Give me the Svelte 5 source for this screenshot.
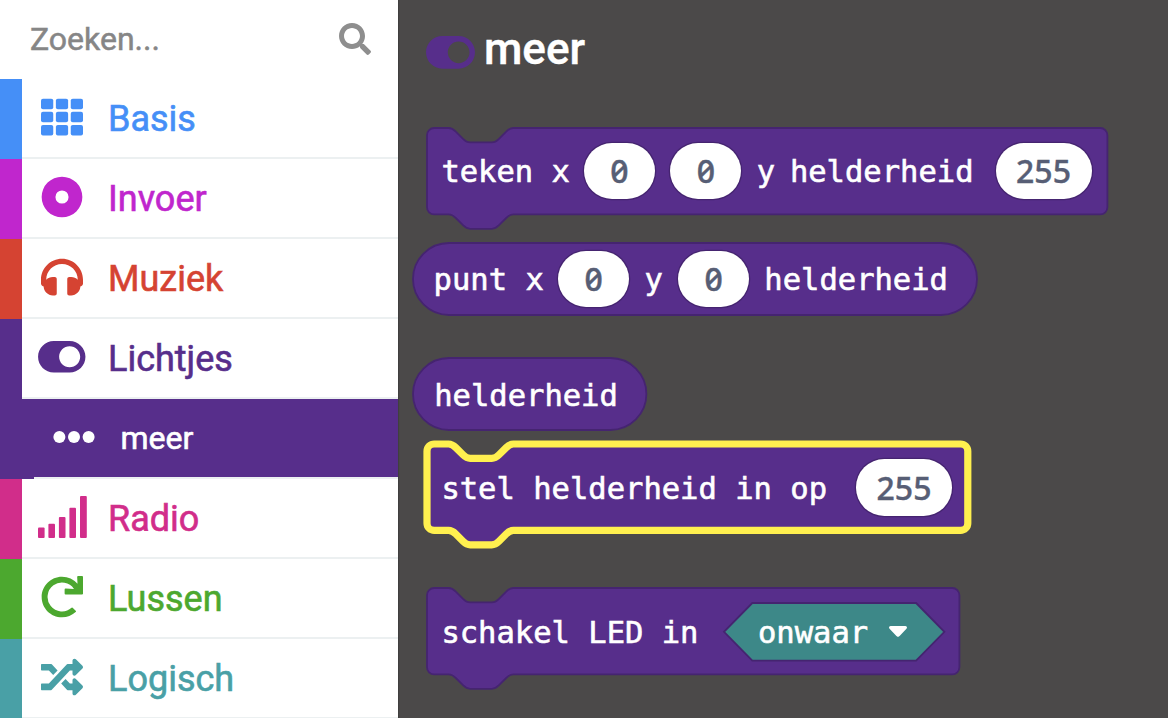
<script>
  const categories = [
    { name: 'Basis', icon: 'grid', color: '#458ff7' },
    { name: 'Invoer', icon: 'dot', color: '#c026cd' },
    { name: 'Muziek', icon: 'headphones', color: '#d54332' },
    { name: 'Lichtjes', icon: 'toggle', color: '#572e8b' },
    { name: 'meer', icon: 'ellipsis', color: '#572e8b', sub: true },
    { name: 'Radio', icon: 'signal', color: '#d12d8a' },
    { name: 'Lussen', icon: 'redo', color: '#4ca82f' },
    { name: 'Logisch', icon: 'shuffle', color: '#49a0a6' }
  ];

  const blocks = [
    {
      kind: 'stack', w: 680.4, top: 0,
      items: [
        { t: 'teken x' }, { n: '0', gap: 14 }, { n: '0', gap: 14.4 }, { t: 'y', gap: 14.4 },
        { t: 'helderheid', gap: 14.8 }, { n: '255', gap: 22 }
      ]
    },
    {
      kind: 'round', w: 564, top: 28.8,
      items: [
        { t: 'punt x' }, { n: '0', gap: 14.4 }, { t: 'y', gap: 14.4 }, { n: '0', gap: 15.2 },
        { t: 'helderheid', gap: 14.2 }
      ]
    },
    { kind: 'round', w: 233.4, top: 43.2, items: [{ t: 'helderheid', gap: 0.6 }] },
    {
      kind: 'stack', w: 540.8, top: 14.4, selected: true,
      items: [{ t: 'stel helderheid in op' }, { n: '255', gap: 29 }]
    },
    {
      kind: 'stack', w: 532.4, top: 57.6,
      items: [{ t: 'schakel LED in' }, { menu: 'onwaar', gap: 25.5 }]
    }
  ];

  const S = 1.8;
  function outline(block) {
    const w = block.w / S;
    if (block.kind === 'round') return `M20 0H${w - 20}a20 20 0 0 1 0 40H20a20 20 0 0 1 0-40z`;
    return `M0 4a4 4 0 0 1 4-4H12c2 0 3 1 4 2l4 4c1 1 2 2 4 2h12c2 0 3-1 4-2l4-4c1-1 2-2 4-2H${w - 4}a4 4 0 0 1 4 4v40a4 4 0 0 1-4 4H48c-2 0-3 1-4 2l-4 4c-1 1-2 2-4 2H24c-2 0-3-1-4-2l-4-4c-1-1-2-2-4-2H4a4 4 0 0 1-4-4z`;
  }
</script>

{#snippet icon(name)}
  {#if name === 'grid'}
    <svg class="ico" width="42" height="42" viewBox="0 0 512 512">
      {#each [32, 192, 352] as y}
        {#each [0, 181.3, 362.7] as x}
          <rect {x} {y} width="149.3" height="128" rx="24" />
        {/each}
      {/each}
    </svg>
  {:else if name === 'dot'}
    <svg class="ico" width="42" height="42" viewBox="0 0 512 512">
      <path fill-rule="evenodd" d="M256 8a248 248 0 1 0 0 496 248 248 0 1 0 0-496zm0 168a80 80 0 1 1 0 160 80 80 0 1 1 0-160z" />
    </svg>
  {:else if name === 'headphones'}
    <svg class="ico" width="42" height="42" viewBox="0 0 512 512">
      <path d="M256 32C114.52 32 0 146.497 0 288v48a32 32 0 0 0 17.689 28.622l14.383 7.191C34.083 431.903 83.421 480 144 480h24c13.255 0 24-10.745 24-24V280c0-13.255-10.745-24-24-24h-24c-31.342 0-59.671 12.879-80 33.627V288c0-105.869 86.131-192 192-192s192 86.131 192 192v1.627C427.671 268.879 399.342 256 368 256h-24c-13.255 0-24 10.745-24 24v176c0 13.255 10.745 24 24 24h24c60.579 0 109.917-48.098 111.928-108.187l14.382-7.191A32 32 0 0 0 512 336v-48c0-141.479-114.496-256-256-256z" />
    </svg>
  {:else if name === 'toggle'}
    <svg class="ico toggle" viewBox="0 64 576 384">
      <path d="M384 64H192C86 64 0 150 0 256s86 192 192 192h192c106 0 192-86 192-192S490 64 384 64zm0 320c-70.8 0-128-57.3-128-128 0-70.8 57.3-128 128-128 70.8 0 128 57.3 128 128 0 70.8-57.3 128-128 128z" />
    </svg>
  {:else if name === 'ellipsis'}
    <svg class="ico" width="42" height="42" viewBox="0 0 42 42">
      <circle cx="6.4" cy="21" r="6" /><circle cx="21" cy="21" r="6" /><circle cx="35.6" cy="21" r="6" />
    </svg>
  {:else if name === 'signal'}
    <svg class="ico" width="49" height="42" viewBox="0 0 49 42">
      <rect x="0" y="31.5" width="6.6" height="10.5" rx="1" />
      <rect x="10.4" y="27.7" width="6.6" height="14.3" rx="1" />
      <rect x="20.9" y="21" width="6.6" height="21" rx="1" />
      <rect x="31.4" y="11.7" width="6.6" height="30.3" rx="1" />
      <rect x="42" y="0" width="6.8" height="42" rx="1" />
    </svg>
  {:else if name === 'redo'}
    <svg class="ico" width="42" height="42" viewBox="0 0 512 512">
      <path d="M500.33 0h-47.41a12 12 0 0 0-12 12.57l4 82.76A247.42 247.42 0 0 0 256 8C119.34 8 7.9 119.53 8 256.19 8.1 393.07 119.1 504 256 504a247.1 247.1 0 0 0 166.18-63.91 12 12 0 0 0 .48-17.43l-34-34a12 12 0 0 0-16.38-.55A176 176 0 1 1 402.1 157.8l-101.53-4.87a12 12 0 0 0-12.57 12v47.41a12 12 0 0 0 12 12h200.33a12 12 0 0 0 12-12V12a12 12 0 0 0-12-12z" />
    </svg>
  {:else if name === 'shuffle'}
    <svg class="ico" width="42" height="42" viewBox="0 0 512 512">
      <path d="M504.971 359.029c9.373 9.373 9.373 24.569 0 33.941l-80 79.984c-15.01 15.01-40.971 4.49-40.971-16.971V416h-58.785a12.004 12.004 0 0 1-8.773-3.812l-70.556-75.596 53.333-57.143L352 336h32v-39.981c0-21.438 25.943-31.998 40.971-16.971l80 79.981zM12 176h84l52.781 56.551 53.333-57.143-70.556-75.596A11.999 11.999 0 0 0 122.785 96H12c-6.627 0-12 5.373-12 12v56c0 6.627 5.373 12 12 12zm372 0v39.984c0 21.46 25.961 31.98 40.971 16.971l80-79.984c9.373-9.373 9.373-24.569 0-33.941l-80-79.981C409.943 24.021 384 34.582 384 56.019V96h-58.785a12.004 12.004 0 0 0-8.773 3.812L96 336H12c-6.627 0-12 5.373-12 12v56c0 6.627 5.373 12 12 12h110.785c3.326 0 6.503-1.381 8.773-3.812L352 176h32z" />
    </svg>
  {/if}
{/snippet}

<div class="editor">
  <aside class="toolbox">
    <div class="search">
      <span>Zoeken...</span>
      <svg width="32" height="32" viewBox="0 0 512 512">
        <path d="M505 442.7L405.3 343c-4.5-4.5-10.6-7-17-7H372c27.6-35.3 44-79.7 44-128C416 93.1 322.9 0 208 0S0 93.1 0 208s93.1 208 208 208c48.3 0 92.7-16.4 128-44v16.3c0 6.4 2.5 12.5 7 17l99.7 99.7c9.4 9.4 24.6 9.4 33.9 0l28.3-28.3c9.4-9.4 9.4-24.6.1-34zM208 336c-70.7 0-128-57.2-128-128 0-70.7 57.2-128 128-128 70.7 0 128 57.2 128 128 0 70.7-57.2 128-128 128z" />
      </svg>
    </div>
    {#each categories as c}
      <div class="row" class:sub={c.sub} style:--c={c.color}>
        <div class="bar"></div>
        <div class="cell">
          <div class="slot">{@render icon(c.icon)}</div>
          <span class="name">{c.name}</span>
        </div>
      </div>
    {/each}
  </aside>

  <main class="flyout">
    <header>
      {@render icon('toggle')}
      <h1>meer</h1>
    </header>
    {#each blocks as b}
      <div class="block {b.kind}" class:selected={b.selected} style:width="{b.w}px" style:margin-top="{b.top}px">
        <svg class="shape" width={b.w} height={b.kind === 'round' ? 72 : 86.4}>
          <path transform="scale({S})" d={outline(b)} />
        </svg>
        {#each b.items as it}
          {#if it.t}
            <span class="label" style:margin-left="{it.gap ?? 0}px">{it.t}</span>
          {:else if it.n}
            <span class="num" class:wide={it.n.length > 1} style:margin-left="{it.gap}px"><span>{it.n}</span></span>
          {:else}
            <span class="menu" style:margin-left="{it.gap}px">
              <svg class="shape" width="220.4" height="57.6">
                <path d="M28.3 0H192.1L220.4 28.8 192.1 57.6H28.3L0 28.8z" />
              </svg>
              <span class="label">{it.menu}</span>
              <svg class="caret" width="20" height="13" viewBox="0 0 20 13">
                <path d="M2.6 1h14.8q1.6 0 1.6 1.5 0 .8-.8 1.6l-6.6 7q-1.6 1.6-3.2 0l-6.6-7Q1 3.300 1 2.500 1 1 2.600 1z" />
              </svg>
            </span>
          {/if}
        {/each}
      </div>
    {/each}
  </main>
</div>

<style>
  :global(body) { margin: 0; overflow: hidden; }
  .editor {
    display: flex;
    width: 1168px;
    height: 718px;
    overflow: hidden;
    font-family: Roboto, sans-serif;
    background: #4b4949;
  }
  .toolbox { width: 398px; flex: none; background: #fff; }
  .search {
    height: 79px;
    box-sizing: border-box;
    padding: 0 27px 1px 30px;
    display: flex;
    align-items: center;
    justify-content: space-between;
    font-size: 32px;
    color: #868686;
    -webkit-text-stroke: 0.5px currentColor;
  }
  .search svg { fill: #8e8e8e; }
  .row { display: flex; height: 80px; color: var(--c); }
  .bar { width: 22px; background: var(--c); }
  .cell {
    flex: 1;
    display: flex;
    align-items: center;
    height: 78px;
    border-bottom: 2px solid #ecf0f1;
  }
  .slot { width: 80px; display: flex; justify-content: center; padding-bottom: 2px; }
  .name { font-size: 36px; margin-left: 6px; padding-top: 2px; -webkit-text-stroke: 0.6px currentColor; }
  .ico { fill: currentColor; display: block; flex: none; }
  .toggle { width: 47.500px; height: 31.600px; }
  .sub { color: #fff; }
  .sub .bar { width: 34px; }
  .sub .cell { background: linear-gradient(var(--c), var(--c)) padding-box; }
  .sub .name { font-size: 32px; padding-top: 0; margin-left: 6.500px; }

  .flyout { flex: 1; padding-left: 29px; background: #4b4949; box-shadow: inset 2px 0 1px -1px #403f3f; }
  header { display: flex; height: 127.700px; align-items: flex-start; color: #572e8b; }
  header .toggle { width: 49px; height: 32.700px; margin: 36px 0 0 -1px; }
  h1 { margin: 22px 0 0 9px; font-size: 44px; line-height: 54px; font-weight: 500; color: #fff; -webkit-text-stroke: 0.4px #fff; }

  .block { position: relative; display: flex; align-items: center; height: 86.400px; box-sizing: border-box; padding-left: 14.400px; }
  .round { height: 72px; margin-left: -14.400px; padding-left: 21px; }
  .shape { position: absolute; left: 0; top: 0; overflow: visible; }
  .shape path { fill: #572e8b; stroke: #452470; stroke-width: 1; }
  .selected > .shape path { stroke: #fff04f; stroke-width: 4; }
  .label {
    font: 30.500px/40px "DejaVu Sans Mono", monospace;
    -webkit-text-stroke: 0.6px #fff;
    color: #fff;
    white-space: pre;
    z-index: 1;
    padding-top: 3px;
  }
  .num {
    position: relative;
    display: flex;
    align-items: center;
    justify-content: center;
    width: 71px;
    margin-right: 1px;
    height: 56.600px;
    box-sizing: border-box;
    flex: none;
    background: #fff;
    box-shadow: 0 0 0 1.300px #452470;
    border-radius: 28.300px;
    font: 500 32px/40px "Noto Sans", sans-serif;
    font-feature-settings: "zero";
    -webkit-text-stroke: 0.4px #575e75;
    color: #575e75;
  }
  .wide { width: 96px; }
  .menu { position: relative; display: flex; align-items: center; width: 220.400px; height: 57.600px; padding-left: 34px; box-sizing: border-box; }
  .menu .shape path { fill: #3d8888; stroke-width: 1.800; }
  .caret { position: relative; margin-left: 20px; fill: #fff; }
</style>
